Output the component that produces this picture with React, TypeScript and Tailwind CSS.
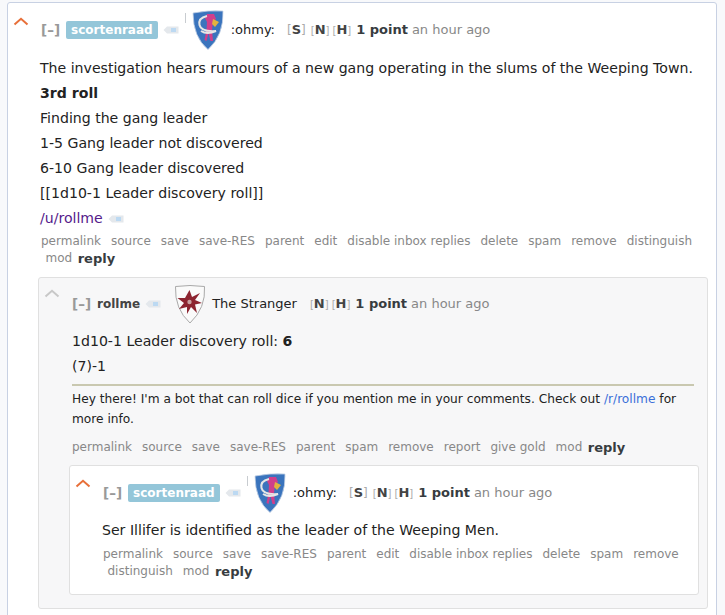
import type { ReactNode } from "react";

const font = "font-['DejaVu_Sans',Verdana,sans-serif]";

function Arrow({ on }: { on?: boolean }) {
    return (
        <svg width="16" height="9" viewBox="0 0 16 9" className="block" fill="none">
            <path d="M1.5 7.5 L8 1.8 L14.5 7.5" stroke={on ? "#e8703a" : "#c8c8c8"} strokeWidth="2" />
        </svg>
    );
}

function Tag() {
    return (
        <svg width="16" height="8" viewBox="0 0 16 8" className="inline-block shrink-0">
            <path d="M4 0.5 H15.5 V7.5 H4 L0.5 4 Z" fill="#e4e8ec" />
            <rect x="8" y="2" width="5" height="4" fill="#bcd9f2" />
        </svg>
    );
}

function BlueShield() {
    return (
        <svg width="32" height="40" viewBox="0 0 32 40" className="block shrink-0">
            <path d="M1 3 Q16 0 31 1 Q32 25 16 39.5 Q1 27 1 3 Z" fill="#3a74bd" stroke="#c5d3e6" strokeWidth="0.8" />
            <path d="M15 4 L22 4 L24 9 L21 12 L20 20 L21 31 L18.5 31 L16.5 23 L14.5 31 L12.5 30 L14.5 20 L15 12 L13 8 Z" fill="#cf3f8c" />
            <path d="M21 9 L27 12 L23 17 L20 14 Z" fill="#e3b23e" />
            <path d="M15 6 Q6 8 7.5 15 Q9 22 24 21 Q15 25 9 21" fill="none" stroke="#e6e6e6" strokeWidth="2" />
        </svg>
    );
}

function StrangerShield() {
    return (
        <svg width="32" height="40" viewBox="0 0 32 40" className="block shrink-0">
            <path d="M1.5 2.5 Q16 0.5 30.5 2.5 Q32 24 16 39 Q0.5 25 1.5 2.5 Z" fill="#fafafa" stroke="#a9a9a9" strokeWidth="1" />
            <path d="M15.5 6 L18 13 L26 9 L21 16 L28 19 L21 20.5 L23 29 L17 23 L13 30 L13 23 L5 25 L10 19 L3.5 14 L11 14 Z" fill="#8c2430" />
            <circle cx="15.5" cy="18" r="2.2" fill="#c9a0a0" />
        </svg>
    );
}

function Flag({ k }: { k: string }) {
    const large = k === "S";
    return (
        <span className="font-bold text-[13px] text-[#444]">
            <span className={`font-normal text-[#aaa] ${large ? "text-[12px]" : "text-[10px]"}`}>[</span>
            {k}
            <span className={`font-normal text-[#aaa] ${large ? "text-[12px]" : "text-[10px]"}`}>]</span>
        </span>
    );
}

function Tagline({ children }: { children: ReactNode }) {
    return (
        <div className="flex items-center h-[40px] whitespace-nowrap">
            <span className="text-[13.5px] font-bold text-[#999] mr-[6px]">[–]</span>
            {children}
            <div className="flex items-center gap-[3px] ml-[5px]">
                <Flag k="N" />
                <Flag k="H" />
            </div>
            <span className="ml-[5px] text-[13px] font-bold text-[#373c3f]">1 point</span>
            <span className="ml-[4px] text-[13px] text-[#888]">an hour ago</span>
        </div>
    );
}

function Author() {
    return (
        <>
            <span className="bg-[#94c6d9] text-white text-[12px] font-bold px-[5px] h-[18px] leading-[18px] rounded-[2px]">scortenraad</span>
            <span className="ml-[5px] mr-[13px] flex items-center relative">
                <Tag />
                <span className="absolute left-[22px] -top-[13px] w-[1px] h-[10px] bg-[#c8ccd0]" />
            </span>
            <BlueShield />
            <span className="ml-[7px] text-[13px] text-[#222]">:ohmy:</span>
            <span className="ml-[12px]"><Flag k="S" /></span>
        </>
    );
}

function Actions({ items }: { items: string[] }) {
    return (
        <div className="text-[12px] leading-[17px] text-[#888]">
            {items.map((a, i) => (
                <span key={a + i} className={`inline-block whitespace-nowrap pr-[5.5px] ${i === 0 ? "pl-0" : "pl-[4.5px]"}`}>
                    {a}
                </span>
            ))}
            <span className="inline-block align-top text-[13px] font-bold text-[#373c3f]">reply</span>
        </div>
    );
}

export default function App() {
    return (
        <div className={`${font} h-[615px] overflow-hidden bg-[#f8f9fb] pl-[7px] pr-2 pt-[2px] text-[14.1px] text-[#222]`}>
            <div className="flex bg-white border border-[#c8d1e3] rounded-[3px] pb-4 w-[710px]">
                <div className="w-[33px] pl-[5px] pt-[14px] shrink-0">
                    <Arrow on />
                </div>
                <div className="flex-1 min-w-0">
                    <div className="pt-[7px]">
                        <Tagline>
                            <Author />
                        </Tagline>
                    </div>
                    <div className="leading-[25px] mt-[6px] -ml-[1px]">
                        <p>The investigation hears rumours of a new gang operating in the slums of the Weeping Town.</p>
                        <p className="font-bold">3rd roll</p>
                        <p>Finding the gang leader</p>
                        <p>1-5 Gang leader not discovered</p>
                        <p>6-10 Gang leader discovered</p>
                        <p>[[1d10-1 Leader discovery roll]]</p>
                        <p className="flex items-center gap-[5px]"><span className="text-[#551a8b]">/u/rollme</span><Tag /></p>
                    </div>
                    <div className="mt-[2px] pr-[10px]">
                        <Actions items={["permalink", "source", "save", "save-RES", "parent", "edit", "disable inbox replies", "delete", "spam", "remove", "distinguish", "mod"]} />
                    </div>

                    <div className="flex mt-[10px] ml-[-3px] mr-[8px] bg-[#f7f7f8] border border-[#e0e0e0] rounded-[3px] pb-[13px]">
                        <div className="w-[33px] pl-[5px] pt-[11px] shrink-0">
                            <Arrow />
                        </div>
                        <div className="flex-1 min-w-0">
                            <div className="pt-[6px]">
                                <Tagline>
                                    <span className="text-[12px] font-bold text-[#444]">rollme</span>
                                    <span className="ml-[5px] mr-[13px] flex items-center"><Tag /></span>
                                    <StrangerShield />
                                    <span className="ml-[6px] mr-[8px] text-[13px] text-[#222]">The Stranger</span>
                                </Tagline>
                            </div>
                            <div className="leading-[25px] mt-[5px]">
                                <p>1d10-1 Leader discovery roll: <b>6</b></p>
                                <p>(7)-1</p>
                            </div>
                            <div className="h-[2px] bg-[#c9c8b0] mr-[13px] mt-[5px]" />
                            <p className="text-[12.2px] leading-[20px] mt-[3px] whitespace-nowrap">
                                Hey there! I'm a bot that can roll dice if you mention me in your comments. Check out <span className="text-[#3a6fd8]">/r/rollme</span> for
                                <br />
                                more info.
                            </p>
                            <div className="mt-[10px]">
                                <Actions items={["permalink", "source", "save", "save-RES", "parent", "spam", "remove", "report", "give gold", "mod"]} />
                            </div>

                            <div className="flex mt-[9px] ml-[-3px] mr-[8px] bg-white border border-[#e0e0e0] rounded-[3px] h-[130px]">
                                <div className="w-[33px] pl-[5px] pt-[13px] shrink-0">
                                    <Arrow on />
                                </div>
                                <div className="flex-1 min-w-0">
                                    <div className="pt-[7px]">
                                        <Tagline>
                                            <Author />
                                        </Tagline>
                                    </div>
                                    <p className="leading-[25px] mt-[5px] -ml-[1px]">Ser Illifer is identified as the leader of the Weeping Men.</p>
                                    <div className="mt-[3px] pr-[10px]">
                                        <Actions items={["permalink", "source", "save", "save-RES", "parent", "edit", "disable inbox replies", "delete", "spam", "remove", "distinguish", "mod"]} />
                                    </div>
                                </div>
                            </div>
                        </div>
                    </div>
                </div>
            </div>
        </div>
    );
}
